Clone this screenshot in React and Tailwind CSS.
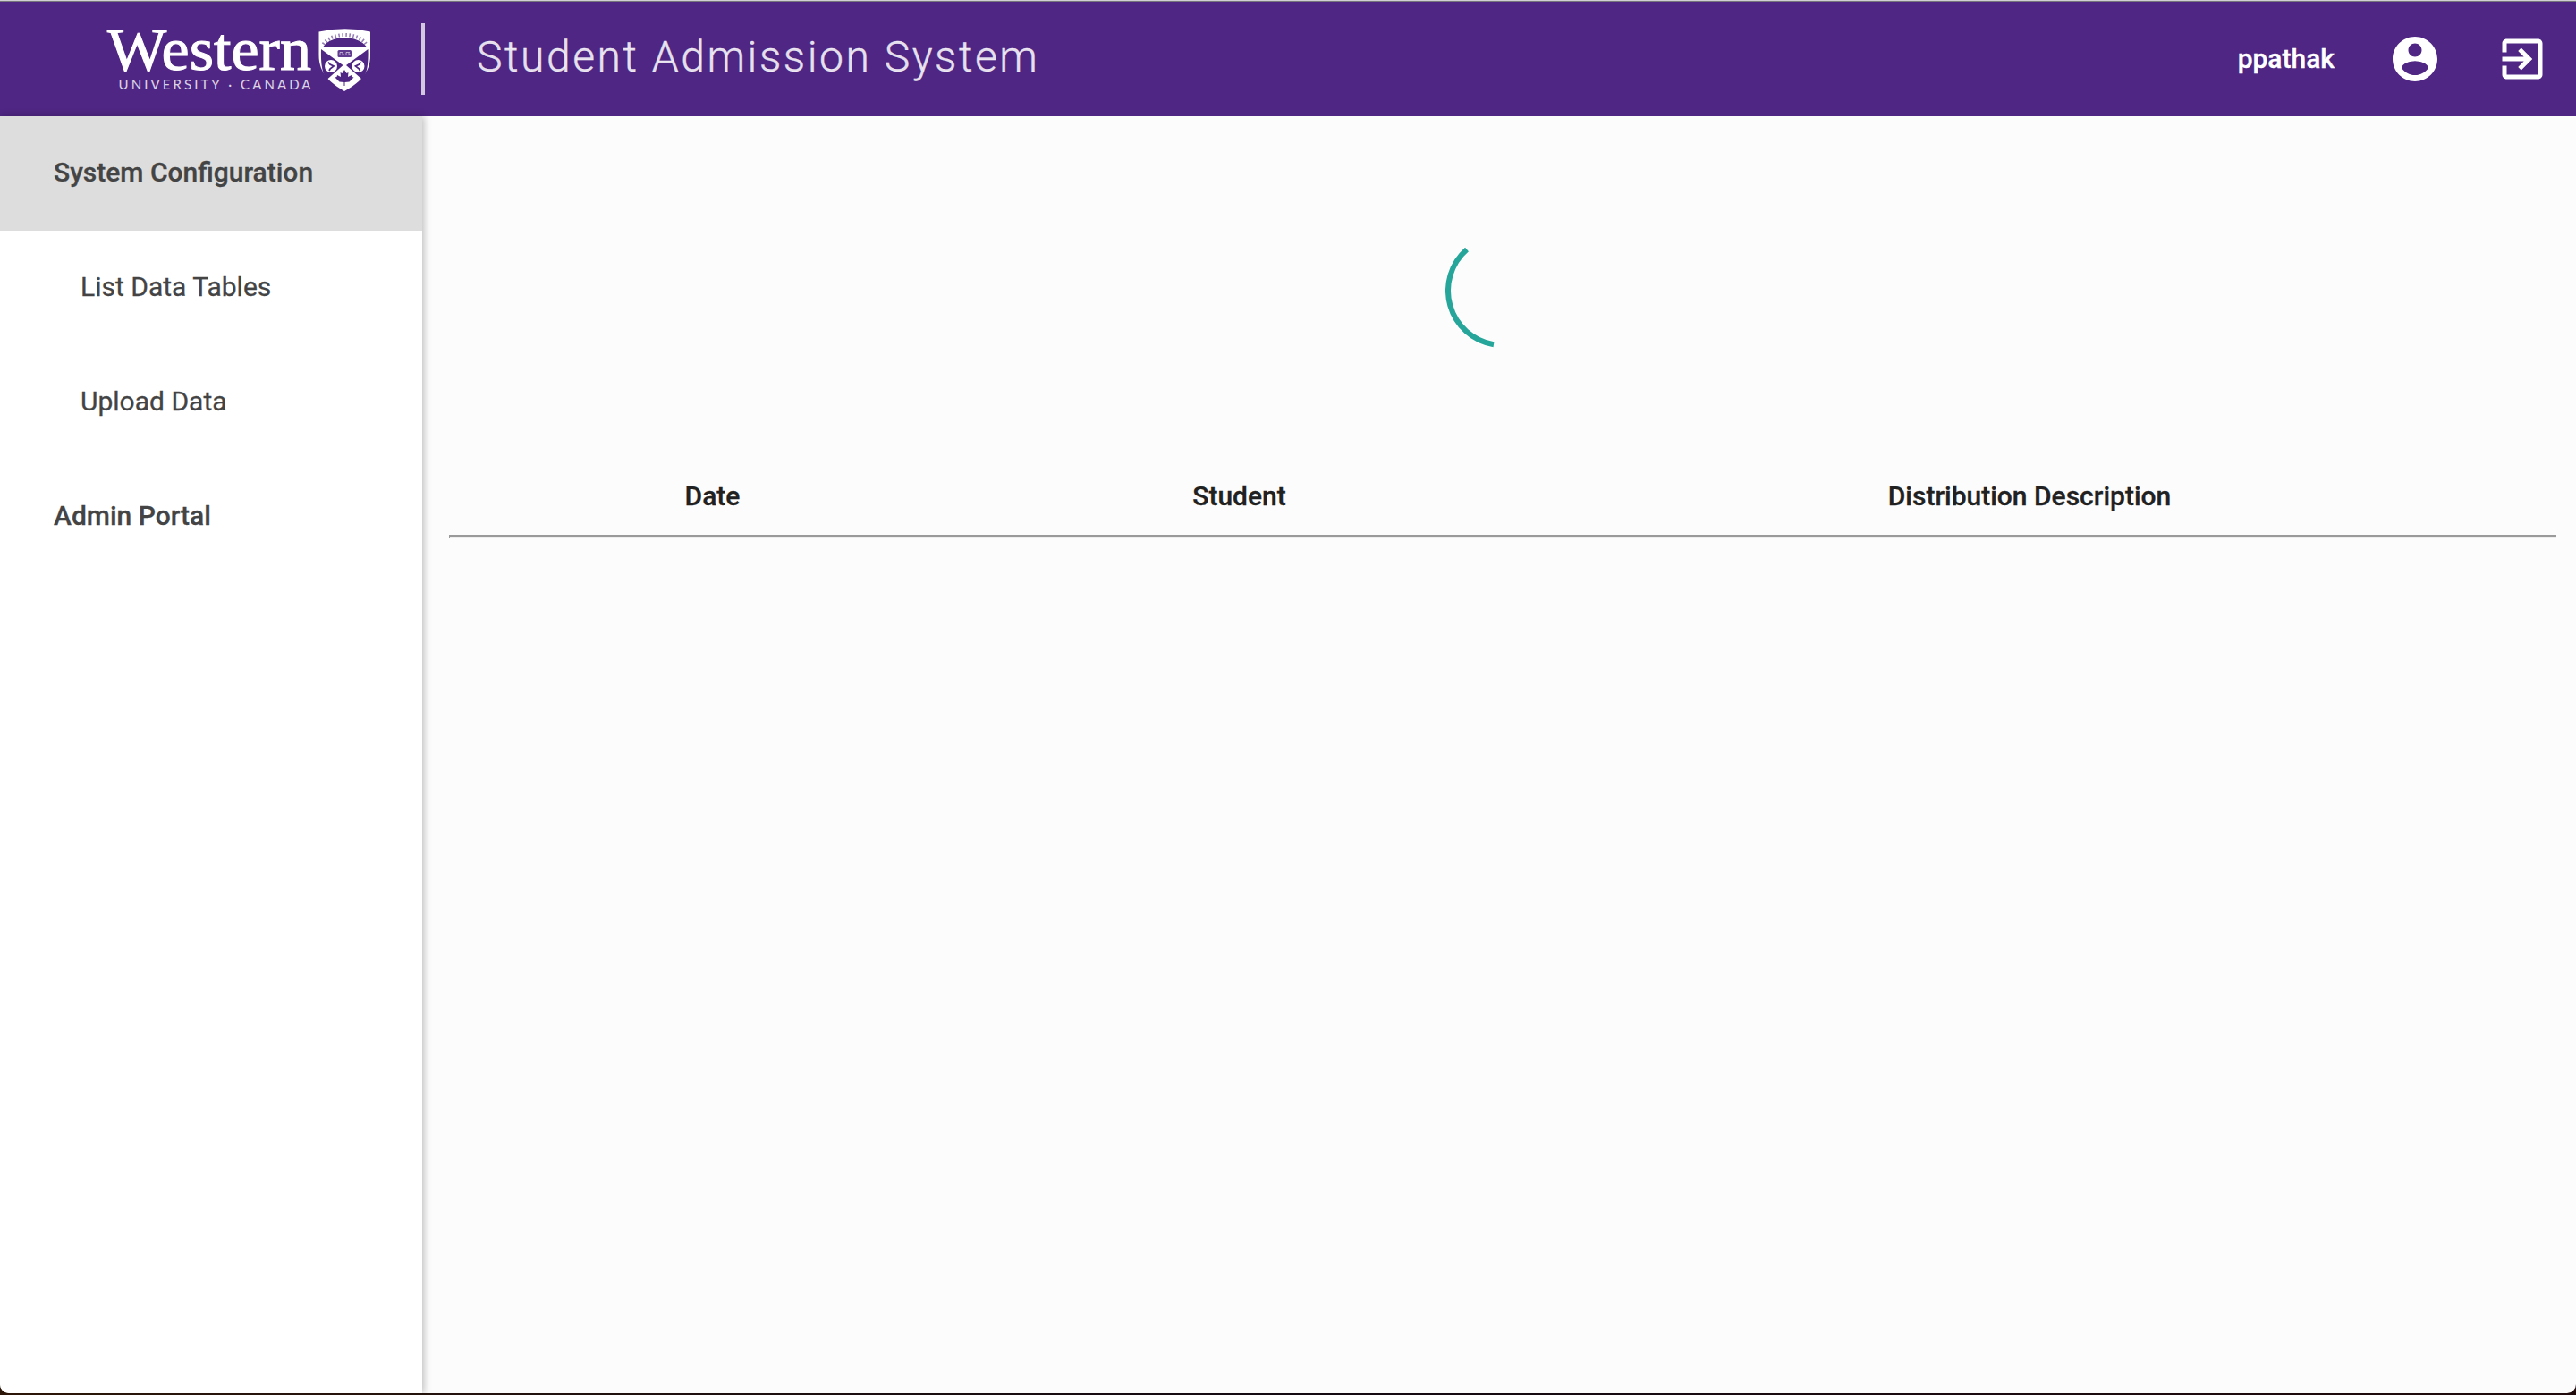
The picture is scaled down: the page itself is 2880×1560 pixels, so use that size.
import React from "react";

function Shield() {
  return (
    <svg className="h-[72px] w-[60px]" viewBox="0 0 60 72">
      <path d="M.5 3.500 Q30 -3 58 3.500 V30 C58 50 45 61 29 70 C13.500 61 .5 50 .5 30Z" fill="#fff" />
      <path d="M5.500 20 C14 7 44 7 53.500 20Z" fill="#4f2683" />
      <path d="M5.500 17.500 C15 3.500 44 3.500 53.500 17.500" fill="none" stroke="#4f2683" strokeWidth="4" strokeDasharray="1.500 2.500" opacity=".6" />
      <path d="M3 23 L27.500 41 L9.500 57 C4.500 50 2.500 42 3 23Z" fill="#4f2683" />
      <path d="M55.500 23 L31 41 L49 57 C54 50 56 42 55.500 23Z" fill="#4f2683" />
      <circle cx="14" cy="42" r="7" fill="#fff" />
      <circle cx="44.500" cy="42" r="7" fill="#fff" />
      <path d="M11 37.500l2 2.500 4 2-4 3-1 2M47.500 37.500l-2 2.500-4 2 4 3 1 2" fill="none" stroke="#4f2683" strokeWidth="1.800" />
      <rect x="21.500" y="24" width="15.500" height="8" rx="1.500" fill="#4f2683" opacity=".9" />
      <path d="M28 26.500h-4v3h4v-1.500h-2M35 26.500h-4v3h4v-1.500h-2" stroke="#fff" strokeWidth=".8" fill="none" opacity=".7" />
      <path d="M29 46l2.500 4 2-1-.500 5 4-2 .500 2 2 .500-5 5-5 .500v4h-1v-4l-5-.500-5-5 2-.500.500-2 4 2-.500-5 2 1z" fill="#4f2683" />
    </svg>
  );
}

function Logo() {
  return (
    <div className="flex w-[296px] shrink-0 items-start">
      <svg className="h-[80px] w-[236px] shrink-0 overflow-visible" viewBox="0 0 236 80">
        <text x="0" y="46" textLength="228" lengthAdjust="spacingAndGlyphs" fill="#fff" stroke="#fff" strokeWidth="1" className="font-['Liberation_Serif',serif] text-[67px]">Western</text>
        <text x="12.500" y="68" textLength="215" fill="#fff" opacity=".8" className="font-['Lato',sans-serif] text-[15px]">UNIVERSITY · CANADA</text>
      </svg>
      <Shield />
    </div>
  );
}

function Header() {
  return (
    <header className="flex h-[130px] items-start bg-[#4f2683] pl-[120px] pr-[30px] text-white">
      <div className="mt-[32px]"><Logo /></div>
      <div className="ml-[55px] mt-[26px] h-[80px] w-[4px] bg-white/75" />
      <h1 className="ml-[58px] mt-[32px] whitespace-nowrap text-[48px] font-light leading-[64px] tracking-[2.55px] text-white/85">Student Admission System</h1>
      <div className="ml-auto mt-[2px] flex h-[128px] items-center">
        <span className="-mt-[2px] text-[30px] font-medium">ppathak</span>
        <svg className="ml-[60px] size-[60px]" viewBox="0 0 24 24" fill="currentColor">
          <path d="M12 2C6.480 2 2 6.480 2 12s4.480 10 10 10 10-4.480 10-10S17.520 2 12 2zm0 3c1.660 0 3 1.340 3 3s-1.340 3-3 3-3-1.340-3-3 1.340-3 3-3zm0 14.200c-2.500 0-4.710-1.280-6-3.220.030-1.990 4-3.080 6-3.080 1.990 0 5.970 1.090 6 3.080-1.290 1.940-3.500 3.220-6 3.220z" />
        </svg>
        <svg className="ml-[60px] size-[60px]" viewBox="0 0 24 24" fill="currentColor">
          <path d="M10.090 15.590L11.500 17l5-5-5-5-1.410 1.410L12.670 11H3v2h9.670l-2.580 2.590zM19 3H5c-1.110 0-2 .9-2 2v4h2V5h14v14H5v-4H3v4c0 1.100.890 2 2 2h14c1.100 0 2-.9 2-2V5c0-1.100-.9-2-2-2z" />
        </svg>
      </div>
    </header>
  );
}

const NAV = [
  { label: "System Configuration", style: "bg-[#dddddd] pl-[60px] font-medium" },
  { label: "List Data Tables", style: "pl-[90px]" },
  { label: "Upload Data", style: "pl-[90px]" },
  { label: "Admin Portal", style: "pl-[60px] font-medium" },
];

export default function App() {
  return (
    <div className="flex h-[1560px] w-[2880px] flex-col overflow-hidden bg-linear-to-r from-[#2c1608] via-[#140a12] to-[#200a0c] font-['Roboto',sans-serif] [-webkit-text-stroke:0.3px]">
      <div className="relative flex h-[1558px] flex-col overflow-hidden rounded-b-[10px] bg-[#fcfcfc]">
        <div className="absolute inset-x-0 top-0 h-[2px] border-b border-[#77777b] bg-[#d0d0d4]" />
        <Header />
        <div className="flex grow">
          <nav className="w-[472px] shrink-0 bg-white text-[30px] text-[#444] shadow-[2px_0_8px_rgba(0,0,0,0.25)]">
            {NAV.map((n) => (
              <div key={n.label} className={`flex h-[128px] items-center pb-[3px] ${n.style}`}>{n.label}</div>
            ))}
          </nav>
          <main className="grow pl-[30px] pr-[22px]">
            <div className="flex h-[382px] justify-center pt-[131px]">
              <svg className="size-[128px]" viewBox="0 0 128 128">
                <path d="M24 18 A61 61 0 0 0 54 124.200" fill="none" stroke="#26a69a" strokeWidth="6" />
              </svg>
            </div>
            <div className="grid h-[86px] grid-cols-[589px_589px_1178px] items-center pb-[2px] text-center text-[30px] font-medium text-[#212121]">
              <div>Date</div>
              <div>Student</div>
              <div>Distribution Description</div>
            </div>
            <div className="h-[4px] border-l border-t-2 border-[#9a9a9a] bg-[#eeeeee]" />
          </main>
        </div>
      </div>
    </div>
  );
}
